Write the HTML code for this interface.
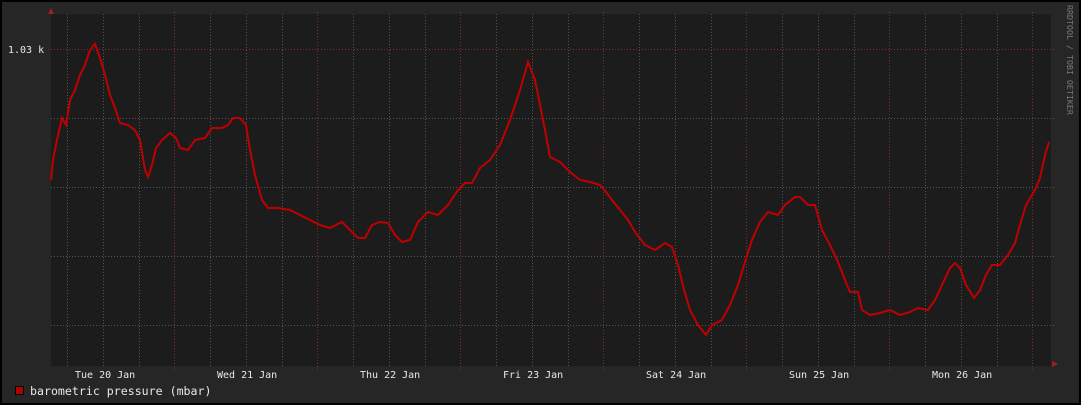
<!DOCTYPE html><html><head><style>body{margin:0;background:#000}svg{display:block}text{font-family:"DejaVu Sans Mono","Liberation Mono",monospace}</style></head><body>
<svg width="1081" height="405" xmlns="http://www.w3.org/2000/svg">
<rect x="0" y="0" width="1081" height="405" fill="#000"/>
<rect x="2" y="2" width="1077" height="401" fill="#262626"/>
<rect x="51" y="14" width="1000" height="352" fill="#1c1c1c"/>
<g stroke="#555" stroke-width="1" stroke-dasharray="1,2" shape-rendering="crispEdges">
<path d="M67.5 14V366M103.5 14V366M139.5 14V366M210.5 14V366M246.5 14V366M282.5 14V366M353.5 14V366M389.5 14V366M425.5 14V366M496.5 14V366M532.5 14V366M568.5 14V366M639.5 14V366M675.5 14V366M711.5 14V366M782.5 14V366M818.5 14V366M854.5 14V366M925.5 14V366M961.5 14V366M997.5 14V366"/>
<path d="M51 118.5H1055M51 187.5H1055M51 256.5H1055M51 325.5H1055"/>
</g>
<g stroke="#7a3030" stroke-width="1" stroke-dasharray="1,2" shape-rendering="crispEdges">
<path d="M174.5 12V370M317.5 12V370M460.5 12V370M603.5 12V370M746.5 12V370M889.5 12V370M1032.5 12V370"/>
<path d="M48 49.5H1055"/>
</g>
<polygon points="48,14 54,14 51,8" fill="#a02020"/>
<polygon points="1052,361 1052,367 1058,364" fill="#a02020"/>
<polyline fill="none" stroke="#c00000" stroke-width="2" stroke-linejoin="miter" points="51,180 53,160 57,140 62,118 66,125 70,100 75,90 80,75 85,65 90,50 95,44 100,58 105,75 110,95 115,108 120,123 128,125 135,130 140,140 145,170 148,177 152,165 156,148 162,140 170,133 176,138 180,148 188,150 195,140 205,138 212,128 222,128 228,125 233,118 240,118 246,125 250,150 255,175 262,200 268,208 278,208 290,210 300,215 310,220 320,225 330,228 342,222 350,230 358,238 365,238 372,225 380,222 388,223 395,235 402,242 410,240 418,222 428,212 438,215 448,205 458,190 465,183 472,183 480,168 490,160 500,145 510,120 520,90 528,62 535,80 540,105 545,130 550,157 560,162 570,172 580,180 590,182 600,185 606,192 612,200 620,210 628,220 635,232 645,245 655,250 665,243 672,247 678,265 684,290 690,310 698,325 706,335 712,325 722,320 730,305 738,285 745,262 752,240 760,222 768,212 778,215 785,205 795,197 800,197 808,205 815,205 822,230 830,245 838,262 845,280 850,292 858,292 862,310 870,315 880,313 890,310 900,315 910,312 918,308 928,310 935,300 942,285 950,268 955,263 960,268 966,285 974,298 980,290 986,275 992,265 1000,265 1008,255 1015,243 1020,225 1026,205 1035,190 1040,178 1045,155 1049,142"/>
<g fill="#e8e8e8" font-size="10">
<text x="8" y="53">1.03 k</text>
<text x="75" y="378">Tue 20 Jan</text>
<text x="217" y="378">Wed 21 Jan</text>
<text x="360" y="378">Thu 22 Jan</text>
<text x="503" y="378">Fri 23 Jan</text>
<text x="646" y="378">Sat 24 Jan</text>
<text x="789" y="378">Sun 25 Jan</text>
<text x="932" y="378">Mon 26 Jan</text>
<text x="30" y="395" font-size="11.6">barometric pressure (mbar)</text>
</g>
<rect x="15.5" y="386.5" width="8" height="8" fill="#b00000" stroke="#000"/>
<text transform="translate(1067,5) rotate(90)" fill="#7a7a7a" font-size="8.3">RRDTOOL / TOBI OETIKER</text>
</svg>
</body></html>
